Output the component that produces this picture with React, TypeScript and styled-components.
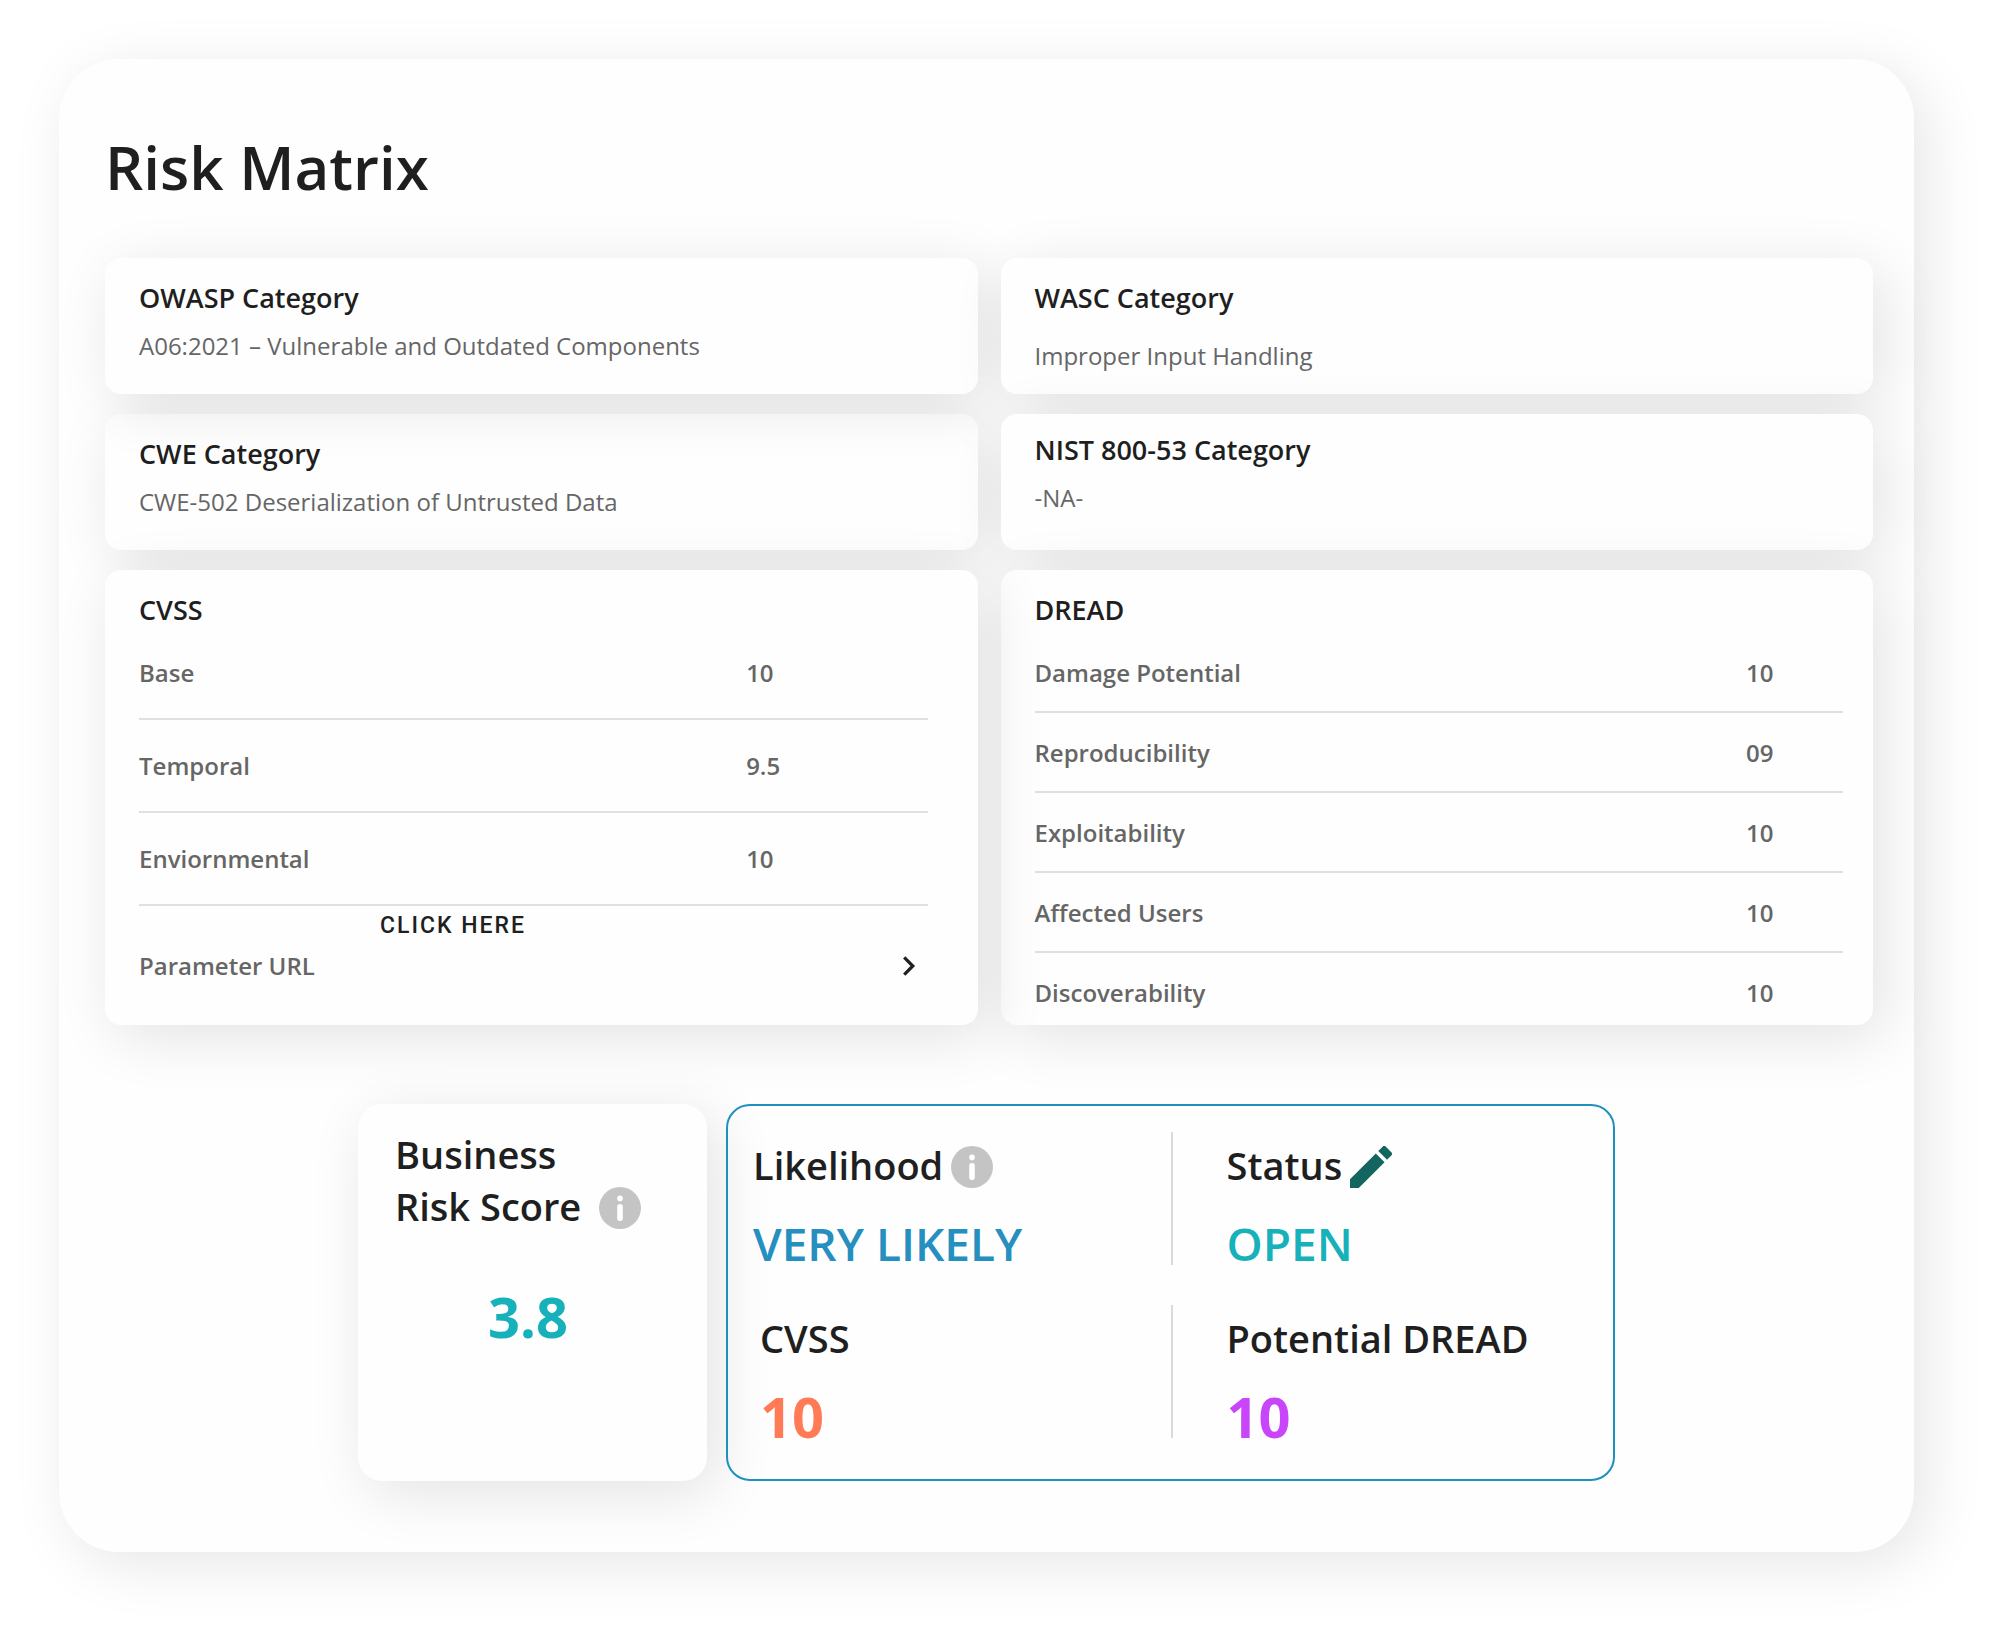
import React from "react";
import styled, { createGlobalStyle } from "styled-components";

const ink = "#1f1f1f";
const muted = "#666666";
const softShadow = "10px 12px 60px rgba(0, 0, 0, 0.11)";

const GlobalStyle = createGlobalStyle`
  * { box-sizing: border-box; }
  body {
    margin: 0;
    background: #ffffff;
    color: ${ink};
    font-family: "Open Sans", "Noto Sans", sans-serif;
  }
  h1, h2, h3, p { margin: 0; }
  button { border: 0; padding: 0; background: none; color: inherit; font: inherit; cursor: pointer; }
`;

const Page = styled.div`
  padding: 59px 86px 86px 59px;
`;

const Panel = styled.main`
  padding: 68px 0 71px;
  border-radius: 60px;
  background: #fefefe;
  box-shadow: 12px 12px 60px rgba(0, 0, 0, 0.1);
`;

const PageTitle = styled.h1`
  margin: 0 41px 51px 46px;
  font-size: 60px;
  line-height: 80px;
  font-weight: 600;
`;

const CardGrid = styled.div`
  display: grid;
  grid-template-columns: repeat(2, minmax(0, 1fr));
  gap: 20px 23px;
  margin: 0 41px 79px 46px;
`;

const Card = styled.section<{ $layer: number; $tight?: boolean; $right?: number }>`
  position: relative;
  z-index: ${(p) => p.$layer};
  min-height: 136px;
  padding: ${(p) => (p.$tight ? 18 : 22)}px ${(p) => p.$right ?? 34}px 16px 34px;
  border-radius: 16px;
  background: #fefefe;
  box-shadow: ${softShadow};
`;

const CardTitle = styled.h2`
  font-size: 27px;
  line-height: 36px;
  font-weight: 600;
`;

const CardText = styled.p<{ $gap?: number }>`
  margin-top: ${(p) => p.$gap ?? 14}px;
  color: ${muted};
  font-size: 24px;
  line-height: 32px;
`;

const ScoreTable = styled.table<{ $labelWidth: number; $above: number; $below: number }>`
  width: 100%;
  border-collapse: separate;
  border-spacing: 0;
  table-layout: fixed;
  color: ${muted};
  font-size: 24px;
  line-height: 32px;

  th, td {
    padding: ${(p) => p.$above}px 0 ${(p) => p.$below}px;
    border-bottom: 2px solid #e0e0e0;
    text-align: left;
    font-weight: 600;
  }
  th { width: ${(p) => p.$labelWidth}%; }
  tr:first-child > * { padding-top: 29px; }
`;

const DreadTable = styled(ScoreTable)`
  tr:last-child > * { padding-bottom: 0; border-bottom: 0; }
`;

const ClickHere = styled.button`
  display: block;
  margin: 4px 0 8px 241px;
  font-family: Roboto, sans-serif;
  font-size: 23px;
  line-height: 32px;
  font-weight: 500;
  letter-spacing: 2px;
`;

const ParameterLink = styled.a`
  display: flex;
  align-items: center;
  justify-content: space-between;
  padding-right: 12px;
  color: ${muted};
  font-size: 24px;
  line-height: 32px;
  font-weight: 600;
  text-decoration: none;
`;

const Summary = styled.div`
  display: flex;
  justify-content: center;
  gap: 19px;
`;

const RiskScore = styled.section`
  flex: 0 0 349px;
  padding: 24px 46px 22px 37px;
  border-radius: 24px;
  background: #fefefe;
  box-shadow: ${softShadow};
`;

const Heading = styled.h3`
  display: flex;
  align-items: center;
  font-size: 38px;
  line-height: 52px;
  font-weight: 600;
`;

const HeadingIcon = styled.button<{ $gap: number }>`
  height: 42px;
  margin: 4px 0 0 ${(p) => p.$gap}px;
  line-height: 0;
`;

const RiskValue = styled.p`
  margin-top: 46px;
  color: #16b1ba;
  font-size: 56px;
  line-height: 76px;
  font-weight: 700;
  text-align: center;
`;

const Ratings = styled.section`
  flex: 0 1 889px;
  display: grid;
  grid-template-columns: repeat(2, minmax(0, 1fr));
  row-gap: 40px;
  padding: 26px 0 41px;
  border: 2px solid #1f8fbf;
  border-radius: 24px;
`;

const Rating = styled.div<{ $left: number; $divided?: boolean }>`
  padding: 7px 0 0 ${(p) => p.$left}px;
  border-left: ${(p) => (p.$divided ? "2px solid #dadada" : "0")};
`;

const RatingValue = styled.p<{ $color: string; $strong?: boolean }>`
  margin-top: 30px;
  color: ${(p) => p.$color};
  font-size: ${(p) => (p.$strong ? 56 : 46)}px;
  line-height: 44px;
  font-weight: ${(p) => (p.$strong ? 700 : 600)};
`;

const InfoIcon = () => (
  <svg width="42" height="42" viewBox="0 0 42 42" aria-hidden="true">
    <circle cx="21" cy="21" r="21" fill="#c4c4c4" />
    <circle cx="21" cy="11.4" r="2.8" fill="#fff" />
    <rect x="18.2" y="17" width="5.6" height="17" rx="2.8" fill="#fff" />
  </svg>
);

const PencilIcon = () => (
  <svg width="42" height="42" viewBox="3 3 18 18" fill="#12665f" aria-hidden="true">
    <path d="M3 17.25V21h3.75L17.81 9.94l-3.75-3.75L3 17.25zM20.71 7.04a1 1 0 0 0 0-1.41l-2.34-2.34a1 1 0 0 0-1.41 0l-1.83 1.83 3.75 3.75 1.83-1.83z" />
  </svg>
);

const ChevronIcon = () => (
  <svg width="14" height="20" viewBox="0 0 14 20" fill="none" stroke={ink} strokeWidth="3.2" aria-hidden="true">
    <path d="M2.2 1.4 10.8 10 2.2 18.6" />
  </svg>
);

const cvss = [
  ["Base", "10"],
  ["Temporal", "9.5"],
  ["Enviornmental", "10"],
];

const dread = [
  ["Damage Potential", "10"],
  ["Reproducibility", "09"],
  ["Exploitability", "10"],
  ["Affected Users", "10"],
  ["Discoverability", "10"],
];

const Rows = ({ data }: { data: string[][] }) => (
  <tbody>
    {data.map(([label, value]) => (
      <tr key={label}>
        <th scope="row">{label}</th>
        <td>{value}</td>
      </tr>
    ))}
  </tbody>
);

export default function App() {
  return (
    <>
      <GlobalStyle />
      <Page>
        <Panel>
          <PageTitle>Risk Matrix</PageTitle>
          <CardGrid>
            <Card $layer={2}>
              <CardTitle>OWASP Category</CardTitle>
              <CardText>A06:2021 – Vulnerable and Outdated Components</CardText>
            </Card>
            <Card $layer={3}>
              <CardTitle>WASC Category</CardTitle>
              <CardText $gap={24}>Improper Input Handling</CardText>
            </Card>
            <Card $layer={1}>
              <CardTitle>CWE Category</CardTitle>
              <CardText>CWE-502 Deserialization of Untrusted Data</CardText>
            </Card>
            <Card $layer={4} $tight>
              <CardTitle>NIST 800-53 Category</CardTitle>
              <CardText>-NA-</CardText>
            </Card>
            <Card $layer={6} $right={50}>
              <CardTitle>CVSS</CardTitle>
              <ScoreTable $labelWidth={77} $above={30} $below={29} aria-label="CVSS">
                <Rows data={cvss} />
              </ScoreTable>
              <ClickHere type="button">CLICK HERE</ClickHere>
              <ParameterLink href="#parameter-url">
                Parameter URL
                <ChevronIcon />
              </ParameterLink>
            </Card>
            <Card $layer={5} $right={30}>
              <CardTitle>DREAD</CardTitle>
              <DreadTable $labelWidth={88} $above={24} $below={22} aria-label="DREAD">
                <Rows data={dread} />
              </DreadTable>
            </Card>
          </CardGrid>
          <Summary>
            <RiskScore>
              <Heading>Business</Heading>
              <Heading>
                Risk Score
                <HeadingIcon $gap={18} type="button" aria-label="About the business risk score">
                  <InfoIcon />
                </HeadingIcon>
              </Heading>
              <RiskValue>3.8</RiskValue>
            </RiskScore>
            <Ratings>
              <Rating $left={25}>
                <Heading>
                  Likelihood
                  <HeadingIcon $gap={8} type="button" aria-label="About likelihood">
                    <InfoIcon />
                  </HeadingIcon>
                </Heading>
                <RatingValue $color="#258fc0">VERY LIKELY</RatingValue>
              </Rating>
              <Rating $left={54} $divided>
                <Heading>
                  Status
                  <HeadingIcon $gap={8} type="button" aria-label="Edit status">
                    <PencilIcon />
                  </HeadingIcon>
                </Heading>
                <RatingValue $color="#16b1ba">OPEN</RatingValue>
              </Rating>
              <Rating $left={32}>
                <Heading>CVSS</Heading>
                <RatingValue $color="#ff7a55" $strong>10</RatingValue>
              </Rating>
              <Rating $left={54} $divided>
                <Heading>Potential DREAD</Heading>
                <RatingValue $color="#c845fa" $strong>10</RatingValue>
              </Rating>
            </Ratings>
          </Summary>
        </Panel>
      </Page>
    </>
  );
}
